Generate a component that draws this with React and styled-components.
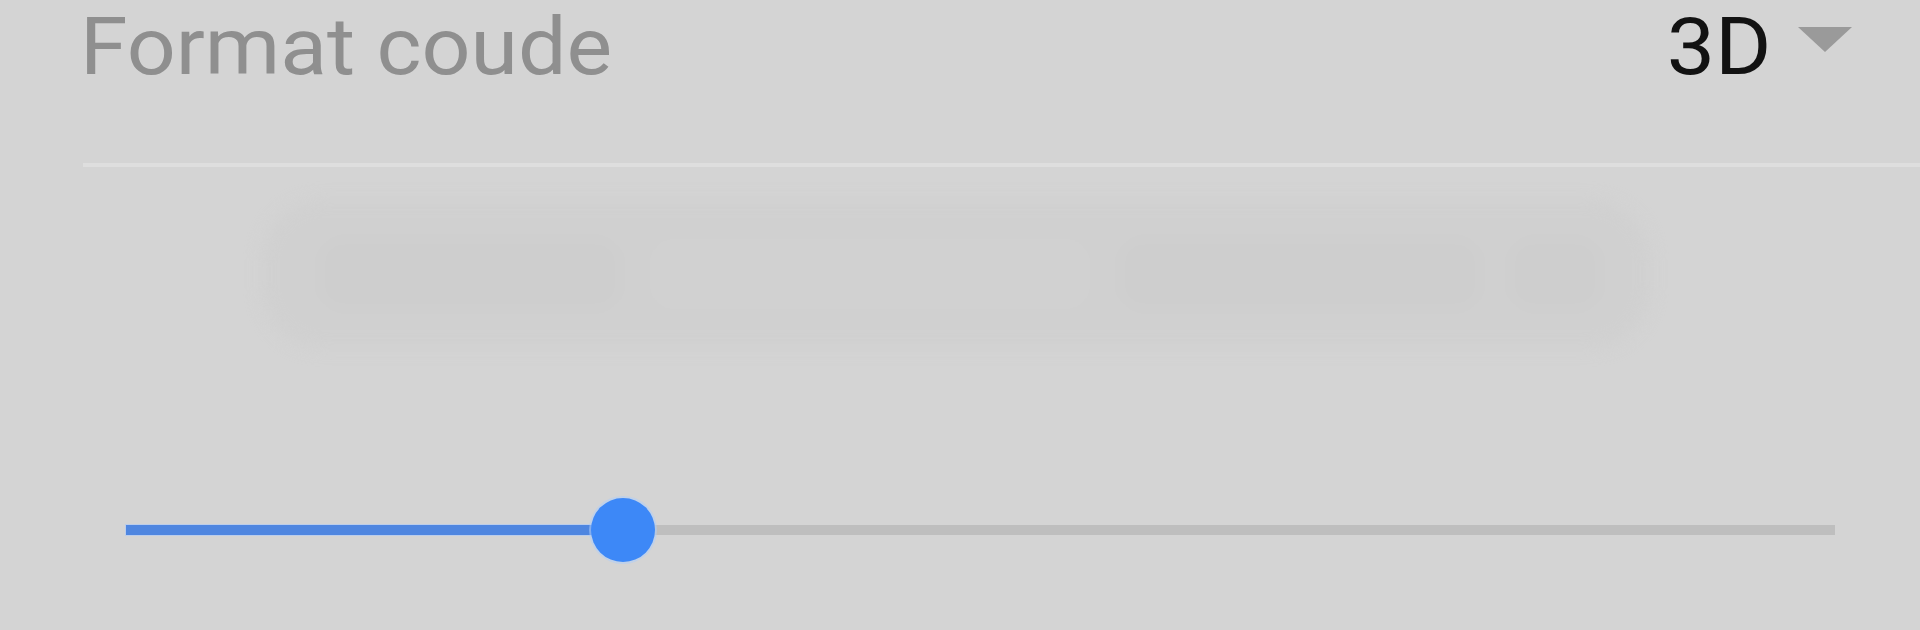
import React from "react";
import styled, { createGlobalStyle } from "styled-components";

const GlobalStyle = createGlobalStyle`
    html, body {
        margin: 0;
        padding: 0;
        background: #d4d4d4;
        font-family: Roboto, "Liberation Sans", sans-serif;
    }
`;

const Page = styled.div`
    width: 1920px;
    height: 630px;
    overflow: hidden;
    background: #d4d4d4;
`;

const Header = styled.div`
    display: flex;
    align-items: flex-start;
    justify-content: space-between;
    padding: 3px 68px 0 80px;
    height: 88px;
`;

const Label = styled.span`
    display: inline-block;
    font-size: 80px;
    line-height: 88px;
    color: ${p => (p.muted ? "#8f8f8f" : "#121212")};
    transform: scaleX(1.075);
    transform-origin: ${p => (p.muted ? "left" : "right")} center;
`;

const Picker = styled.div`
    display: flex;
    align-items: flex-start;
    gap: 27px;
`;

const Caret = styled.span`
    margin-top: 24px;
    width: 0;
    height: 0;
    border-left: 27px solid transparent;
    border-right: 27px solid transparent;
    border-top: 25px solid #9a9a9a;
`;

const Divider = styled.div`
    height: 4px;
    margin: 72px 0 0 83px;
    background: #dedede;
`;

const Ghost = styled.div`
    display: flex;
    align-items: center;
    gap: 30px;
    height: 148px;
    margin: 33px 270px 0 262px;
    padding: 0 50px 0 58px;
    border-radius: 60px;
    background: #d0d0d0;
    filter: blur(8px);
`;

const GhostPiece = styled.div`
    flex: ${p => p.grow || 0} 0 ${p => p.basis}px;
    height: 70px;
    border-radius: 24px;
    background: ${p => (p.dark ? "#cecece" : "#d1d1d1")};
`;

const SliderWrap = styled.div`
    position: relative;
    height: 64px;
    margin: 150px 85px 0 126px;
    display: flex;
    align-items: center;
`;

const Track = styled.div`
    position: relative;
    width: 100%;
    height: 10px;
    background: #bebebe;
`;

const Fill = styled.div`
    height: 100%;
    background: #4f86e0;
    box-shadow: 0 0 0 1px rgba(170, 200, 250, 0.6);
`;

const Thumb = styled.div`
    position: absolute;
    top: 0;
    width: 64px;
    height: 64px;
    margin-left: -32px;
    border-radius: 50%;
    background: #3d88f7;
    box-shadow: 0 0 0 2px rgba(175, 205, 250, 0.55);
`;

export default function App() {
    const value = 0.291;

    return (
        <Page>
            <GlobalStyle />
            <Header>
                <Label muted>Format coude</Label>
                <Picker>
                    <Label>3D</Label>
                    <Caret />
                </Picker>
            </Header>
            <Divider />
            <Ghost>
                <GhostPiece basis={300} dark />
                <GhostPiece basis={280} grow={1} />
                <GhostPiece basis={360} dark />
                <GhostPiece basis={90} dark />
            </Ghost>
            <SliderWrap>
                <Track>
                    <Fill style={{ width: `${value * 100}%` }} />
                </Track>
                <Thumb style={{ left: `${value * 100}%` }} />
            </SliderWrap>
        </Page>
    );
}
